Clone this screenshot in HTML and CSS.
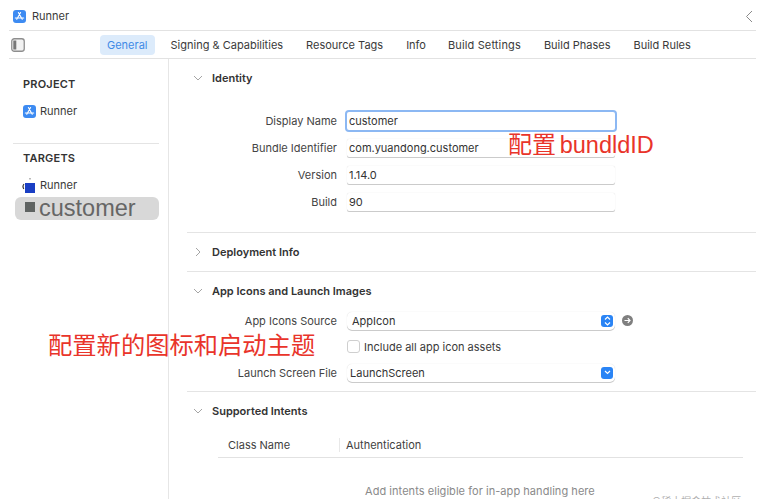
FILE: index.html
```html
<!DOCTYPE html>
<html lang="zh">
<head>
<meta charset="utf-8">
<title>Runner</title>
<link rel="stylesheet" href="styles.css">
</head>
<body>
<div class="app">
  <header class="titlebar">
    <svg class="appicon" width="13" height="13" viewBox="0 0 13 13"><rect width="13" height="13" rx="3" fill="#3d8bf2"/><path d="M7.600 2.500 3.800 9.300M5.400 2.500 9.200 9.300M2.300 8h8.400" stroke="#fff" stroke-width="1.100" fill="none" stroke-linecap="round"/></svg>
    <span class="title">Runner</span>
    <svg class="back" width="8" height="13" viewBox="0 0 8 13"><path d="M7 1 1.500 6.500 7 12" stroke="#8a8a8a" stroke-width="1" fill="none"/></svg>
  </header>
  <nav class="tabbar">
    <svg class="sidetoggle" width="14" height="14" viewBox="0 0 14 14"><rect x=".75" y=".75" width="12.500" height="12.500" rx="2.500" fill="#f2f2f2" stroke="#8e8e8e" stroke-width="1.300"/><rect x="2.300" y="2.500" width="3" height="9" fill="#777"/></svg>
    <span class="tab active">General</span>
    <span class="tab">Signing &amp; Capabilities</span>
    <span class="tab">Resource Tags</span>
    <span class="tab">Info</span>
    <span class="tab wide">Build Settings</span>
    <span class="tab">Build Phases</span>
    <span class="tab">Build Rules</span>
  </nav>
  <div class="content">
    <aside class="sidebar">
      <h3 class="side-head">PROJECT</h3>
      <div class="side-item">
        <svg class="appicon" width="13" height="13" viewBox="0 0 13 13"><rect width="13" height="13" rx="3" fill="#3d8bf2"/><path d="M7.600 2.500 3.800 9.300M5.400 2.500 9.200 9.300M2.300 8h8.400" stroke="#fff" stroke-width="1.100" fill="none" stroke-linecap="round"/></svg>
        <span>Runner</span>
      </div>
      <hr class="side-rule">
      <h3 class="side-head targets">TARGETS</h3>
      <div class="side-item target">
        <svg class="target-icon" width="14" height="16" viewBox="0 0 14 16"><path d="M2 7C.8 8.500.8 10.500 1.800 12" stroke="#333" stroke-width="1.200" fill="none"/><rect x="7.500" y="1" width="1" height="1.500" fill="#777"/><rect x="3" y="6" width="10" height="10" fill="#1a3fc4"/></svg>
        <span>Runner</span>
      </div>
      <div class="selected">
        <span class="sel-square"></span>
        <span class="sel-text">customer</span>
      </div>
    </aside>
    <main class="main">
      <section class="section identity">
        <h2 class="sec-head"><svg class="chev" width="10" height="6" viewBox="0 0 10 6"><path d="M1 1l4 4 4-4" stroke="#a5a5a5" fill="none"/></svg>Identity</h2>
        <div class="form">
          <div class="row"><label class="lab">Display Name</label><div class="field focus">customer</div></div>
          <div class="row"><label class="lab">Bundle Identifier</label><div class="field">com.yuandong.customer</div></div>
          <div class="row"><label class="lab">Version</label><div class="field">1.14.0</div></div>
          <div class="row"><label class="lab">Build</label><div class="field">90</div></div>
        </div>
      </section>
      <section class="section collapsed">
        <h2 class="sec-head"><svg class="chev" width="10" height="10" viewBox="0 0 10 10"><path d="M3 1l4 4-4 4" stroke="#a5a5a5" fill="none"/></svg>Deployment Info</h2>
      </section>
      <section class="section icons">
        <h2 class="sec-head"><svg class="chev" width="10" height="6" viewBox="0 0 10 6"><path d="M1 1l4 4 4-4" stroke="#a5a5a5" fill="none"/></svg>App Icons and Launch Images</h2>
        <div class="form form2">
          <div class="row"><label class="lab">App Icons Source</label>
            <div class="field select">AppIcon<span class="stepper"><svg width="7" height="10" viewBox="0 0 7 10"><path d="M1 3.500 3.500 1 6 3.500M1 6.500 3.500 9 6 6.500" stroke="#fff" stroke-width="1.200" fill="none"/></svg></span></div>
            <svg class="goto" width="11" height="11" viewBox="0 0 11 11"><circle cx="5.500" cy="5.500" r="5.500" fill="#7f7f7f"/><path d="M2.500 5.500h5.500M5.800 3.200 8 5.500 5.800 7.800" stroke="#fff" stroke-width="1.200" fill="none"/></svg>
          </div>
          <div class="row check"><span class="box"></span><span class="check-text">Include all app icon assets</span></div>
          <div class="row"><label class="lab">Launch Screen File</label>
            <div class="field select tight">LaunchScreen<span class="stepper"><svg width="7" height="5" viewBox="0 0 7 5"><path d="M1 1 3.500 3.500 6 1" stroke="#fff" stroke-width="1.200" fill="none"/></svg></span></div>
          </div>
        </div>
      </section>
      <section class="section intents">
        <h2 class="sec-head"><svg class="chev" width="10" height="6" viewBox="0 0 10 6"><path d="M1 1l4 4 4-4" stroke="#a5a5a5" fill="none"/></svg>Supported Intents</h2>
        <div class="table-head"><span class="col-a">Class Name</span><span class="col-b">Authentication</span></div>
        <p class="hint">Add intents eligible for in-app handling here</p>
      </section>
    </main>
  </div>
  <div class="note note-a">配置 <span class="latin">bundldID</span></div>
  <div class="note note-b">配置新的图标和启动主题</div>
  <div class="watermark">©稀土掘金技术社区</div>
</div>
</body>
</html>
```

FILE: styles.css
```css
* { box-sizing: border-box; }
html, body { margin: 0; padding: 0; background: #fff; }
body { font-family: Inter, "Noto Sans CJK SC", sans-serif; font-size: 11px; color: #3a3a3a; }
.app { position: relative; width: 760px; height: 499px; overflow: hidden; }
.titlebar { display: flex; align-items: center; height: 31px; margin: 0 4px 0 9px; padding: 2px 3px 0 4px; border-bottom: 1px solid #e2e2e2; }
.title { margin-left: 6px; }
.back { margin-left: auto; }
.tabbar { display: flex; align-items: center; height: 28px; margin: 0 4px 0 9px; border-bottom: 1px solid #e2e2e2; position: relative; }
.sidetoggle { margin: 0 75px 0 2px; }
.tab { padding: 0 7px; height: 20px; line-height: 20px; margin-right: 9px; border-radius: 4px; white-space: nowrap; }
.tab.wide { letter-spacing: .14px; margin-left: -1px; }
.tab.active { background: #dcebfb; color: #3f8ae6; }
.content { display: flex; height: 440px; }
.sidebar { width: 169px; flex: none; border-right: 1px solid #e6e6e6; padding: 18px 9px 0 15px; }
.side-head { margin: 0 0 0 8px; font-size: 11px; font-weight: 600; line-height: 14px; color: #333; letter-spacing: .2px; }
.side-item { display: flex; align-items: center; gap: 4px; height: 14px; margin: 13px 0 0 8px; }
.side-rule { border: 0; border-top: 1px solid #e4e4e4; margin: 25px 0 0 -2px; height: 0; }
.targets { margin-top: 7px; }
.target { margin-top: 13px; margin-left: 7px; gap: 4px; }
.selected { display: flex; align-items: center; height: 23px; margin-top: 5px; background: #d8d8d8; border-radius: 6px; padding-left: 10px; color: #666; }
.sel-square { width: 10px; height: 10px; background: #5f6362; margin: -3px 4px 0 0; }
.sel-text { font-family: "Liberation Sans", sans-serif; font-size: 23.500px; line-height: 23px; color: #666; }
.main { flex: 1; padding: 0 4px 0 18px; min-width: 0; }
.section { border-bottom: 1px solid #e4e4e4; }
.sec-head { display: flex; align-items: center; margin: 0; font-size: 11px; font-weight: 600; height: 14px; color: #333; }
.chev { margin: 0 9px 0 6px; flex: none; }
.identity { height: 174px; padding-top: 12px; }
.form { margin-top: 26px; display: flex; flex-direction: column; gap: 8px; }
.row { display: flex; align-items: center; height: 19px; }
.lab { width: 150px; text-align: right; color: #444; flex: none; }
.field { width: 268px; height: 18px; margin-left: 10px; padding: 0 2px; line-height: 18px; background: #fff; border-radius: 2px; box-shadow: 0 0 1px rgba(0,0,0,.18), 0 1px 0 #cfcfcf; color: #333; position: relative; }
.field.focus { box-shadow: 0 0 0 2px #8cb8f3; }
.collapsed { height: 39px; padding-top: 12px; }
.icons { height: 120px; padding-top: 12px; }
.form2 { margin-top: 13px; gap: 8px; }
.select { border-radius: 5px; padding-left: 5px; }
.tight { padding-left: 3px; }
.stepper { position: absolute; right: 2px; top: 3px; width: 12px; height: 12px; border-radius: 3px; background: #2a84f5; display: flex; align-items: center; justify-content: center; }
.goto { margin-left: 7px; }
.check { height: 17px; padding-left: 160px; gap: 4px; }
.box { width: 13px; height: 13px; border-radius: 3px; border: 1px solid #cfcfcf; background: #fff; }
.intents { border: 0; padding-top: 12px; }
.table-head { display: flex; align-items: center; height: 26px; margin: 14px 13px 0 31px; border-bottom: 1px solid #e2e2e2; color: #3f3f3f; }
.col-a { width: 122px; padding-left: 10px; border-right: 1px solid #e8e8e8; line-height: 14px; }
.col-b { padding-left: 6px; }
.hint { margin: 26px 0 0 178px; color: #8a8a8a; line-height: 14px; white-space: nowrap; letter-spacing: .05px; }
.note { position: absolute; color: #e9342a; font-family: "Liberation Sans", "Noto Sans CJK SC", sans-serif; white-space: nowrap; }
.note-a { left: 508px; top: 131px; font-size: 24px; line-height: 28px; word-spacing: -3px; }
.latin { font-size: 23.500px; }
.note-b { left: 48px; top: 332px; font-size: 24.300px; line-height: 28px; }
.watermark { position: absolute; left: 652px; top: 495px; font-size: 10px; line-height: 12px; color: #b0b0b0; white-space: nowrap; }
```
